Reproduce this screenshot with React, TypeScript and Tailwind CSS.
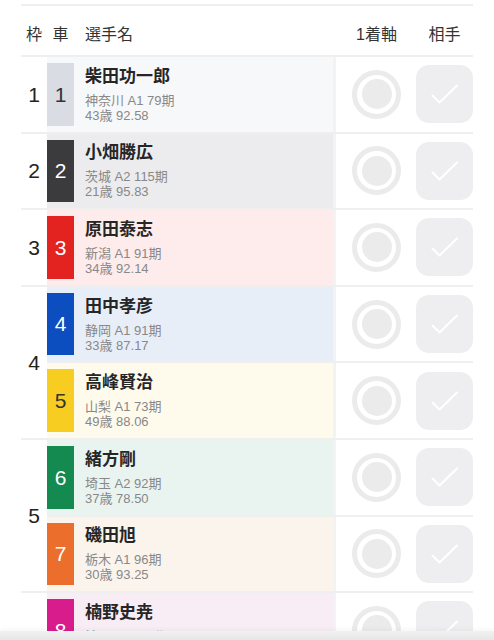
import React from 'react'

interface Racer {
  no: number
  name: string
  info: string
  stats: string
  box: string
  text: string
  bg: string
}

interface WakuGroup {
  waku: number
  racers: Racer[]
}

const groups: WakuGroup[] = [
  {
    waku: 1,
    racers: [
      { no: 1, name: '柴田功一郎', info: '神奈川 A1 79期', stats: '43歳 92.58', box: 'bg-[#d9dde3]', text: 'text-[#333]', bg: 'bg-[#f7f8fa]' },
    ],
  },
  {
    waku: 2,
    racers: [
      { no: 2, name: '小畑勝広', info: '茨城 A2 115期', stats: '21歳 95.83', box: 'bg-[#3b3b3d]', text: 'text-white', bg: 'bg-[#ececee]' },
    ],
  },
  {
    waku: 3,
    racers: [
      { no: 3, name: '原田泰志', info: '新潟 A1 91期', stats: '34歳 92.14', box: 'bg-[#e2231f]', text: 'text-white', bg: 'bg-[#fdeceb]' },
    ],
  },
  {
    waku: 4,
    racers: [
      { no: 4, name: '田中孝彦', info: '静岡 A1 91期', stats: '33歳 87.17', box: 'bg-[#0c4dbf]', text: 'text-white', bg: 'bg-[#e8eef8]' },
      { no: 5, name: '高峰賢治', info: '山梨 A1 73期', stats: '49歳 88.06', box: 'bg-[#f8cd22]', text: 'text-[#333]', bg: 'bg-[#fefbec]' },
    ],
  },
  {
    waku: 5,
    racers: [
      { no: 6, name: '緒方剛', info: '埼玉 A2 92期', stats: '37歳 78.50', box: 'bg-[#158a50]', text: 'text-white', bg: 'bg-[#e9f4f1]' },
      { no: 7, name: '磯田旭', info: '栃木 A1 96期', stats: '30歳 93.25', box: 'bg-[#ec6e2c]', text: 'text-white', bg: 'bg-[#faf4ed]' },
    ],
  },
  {
    waku: 6,
    racers: [
      { no: 8, name: '楠野史尭', info: '埼玉 A2 105期', stats: '28歳 85.40', box: 'bg-[#d81c8c]', text: 'text-white', bg: 'bg-[#f8ecf5]' },
      { no: 9, name: '山田雄大', info: '千葉 A2 111期', stats: '25歳 84.12', box: 'bg-[#7b3fa0]', text: 'text-white', bg: 'bg-[#f2ecf7]' },
    ],
  },
]

const FirstMark = () => (
  <div className="ml-[16px] flex h-[49px] w-[49px] items-center justify-center rounded-full border-[5px] border-[#ebebeb]">
    <div className="h-[30px] w-[30px] rounded-full bg-[#ebebeb]" />
  </div>
)

const PartnerCheck = () => (
  <div className="ml-[15px] flex h-[58px] w-[57px] items-center justify-center rounded-[13px] bg-[#eeeef0]">
    <svg width="57" height="58" viewBox="0 0 57 58" fill="none">
      <path d="M16.5 30.5 L23.5 37.5 L41 20.5" stroke="#ffffff" strokeWidth="2" strokeLinecap="round" strokeLinejoin="round" />
    </svg>
  </div>
)

const RacerRow: React.FC<{ racer: Racer; first: boolean }> = ({ racer, first }) => (
  <div className={`flex ${first ? 'h-[74.6px]' : 'h-[76.6px] border-t-2 border-[#efefef]'}`}>
    {/* car number + name */}
    <div className={`flex flex-1 ${racer.bg}`}>
      <div className="flex w-[27px] py-[6px]">
        <div className={`flex flex-1 items-center justify-center text-[21px] ${racer.box} ${racer.text}`}>
          {racer.no}
        </div>
      </div>
      <div className="flex flex-col justify-center pl-[11px]">
        <div className="text-[17px] font-bold leading-[22px] text-[#262626]">{racer.name}</div>
        <div className="mt-[5px] text-[13px] leading-[15px] text-[#888]">{racer.info}</div>
        <div className="text-[13px] leading-[15px] text-[#888]">{racer.stats}</div>
      </div>
    </div>

    {/* picks */}
    <div className="flex w-[140px] items-center border-l-[3px] border-[#f3f3f3] bg-white">
      <FirstMark />
      <PartnerCheck />
    </div>
  </div>
)

export default function App() {
  return (
    <div
      className="min-h-screen bg-white px-[21px] pt-[4px]"
      style={{ fontFamily: "'Liberation Sans', 'Noto Sans CJK JP', sans-serif" }}
    >
      <div className="border-t-2 border-[#efefef]">
        {/* Header */}
        <div className="flex h-[51px] border-b-2 border-[#efefef] pt-[17px] text-[16px] leading-[24px] text-[#333]">
          <div className="w-[26px] text-center">枠</div>
          <div className="w-[27px] text-center">車</div>
          <div className="flex-1 pl-[11px]">選手名</div>
          <div className="flex w-[140px] pl-[3px]">
            <div className="ml-[16px] w-[49px] text-center whitespace-nowrap">1着軸</div>
            <div className="ml-[15px] w-[57px] text-center">相手</div>
          </div>
        </div>

        {/* Waku groups */}
        {groups.map((g) => (
          <div key={g.waku} className="flex border-b-2 border-[#efefef]">
            <div className="flex w-[26px] items-center justify-center text-[21px] text-[#222]">{g.waku}</div>
            <div className="flex flex-1 flex-col">
              {g.racers.map((r, i) => (
                <RacerRow key={r.no} racer={r} first={i === 0} />
              ))}
            </div>
          </div>
        ))}
      </div>

      {/* bottom bar shadow */}
      <div className="fixed inset-x-0 bottom-0 h-[9px] bg-linear-to-b from-[#f1f1f1] to-[#e6e6e6] shadow-[0_-2px_4px_rgba(0,0,0,0.04)]" />
    </div>
  )
}
